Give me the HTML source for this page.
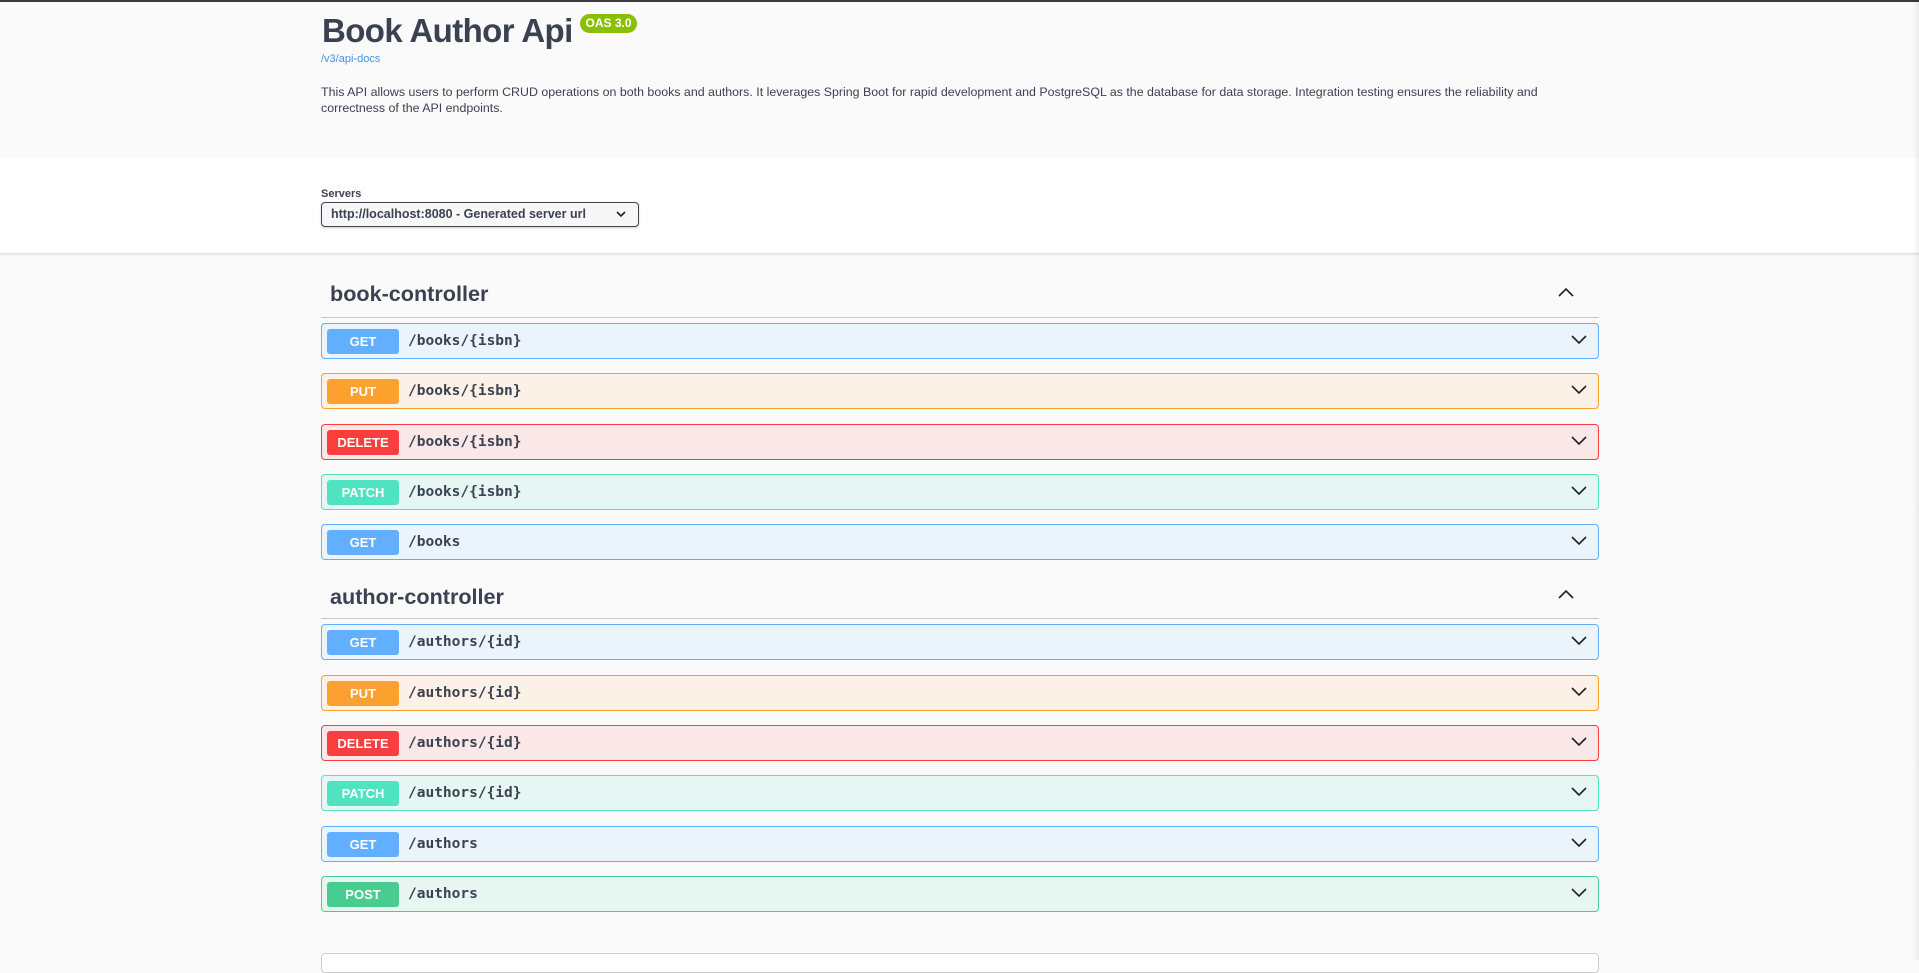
<!DOCTYPE html>
<html><head><meta charset="utf-8"><style>
*{box-sizing:border-box;margin:0;padding:0}
body{width:1919px;height:960px;overflow:hidden;background:#fafafa;font-family:"Liberation Sans",sans-serif;color:#3b4151;position:relative}
.topline{position:absolute;left:0;top:0;width:1919px;height:2px;background:#3b3b3b}
.info{position:absolute;left:0;top:2px;width:1919px;height:156px;background:#fafafa}
.white{position:absolute;left:0;top:158px;width:1919px;height:96px;background:#fff;border-bottom:1px solid #e0e0e0;box-shadow:0 1px 2px rgba(0,0,0,.08)}
.scroll{position:absolute;right:0;top:0;width:6px;height:960px;background:linear-gradient(to right,rgba(0,0,0,0),rgba(0,0,0,.06))}
h1{position:absolute;left:322px;top:12px;font-size:33px;font-weight:bold;color:#3b4151;letter-spacing:-0.6px}
.oas{position:absolute;left:580px;top:14px;width:57px;height:19px;border-radius:10px;background:#89bf04;color:#fff;font-size:12px;font-weight:bold;text-align:center;line-height:19px}
.link{position:absolute;left:321px;top:53px;font-size:11px;color:#4990e2}
.desc{position:absolute;left:321px;top:84px;width:1280px;font-size:12.4px;line-height:16px;color:#3b4151}
.slabel{position:absolute;left:321px;top:188px;font-size:11px;font-weight:bold}
.select{position:absolute;left:321px;top:202px;width:318px;height:25px;border:1px solid #41444e;border-radius:4px;background:#f7f7f7;font-size:12.5px;font-weight:bold;padding-left:9px;line-height:23px;box-shadow:0 1px 2px rgba(0,0,0,.2)}
.select svg{position:absolute;right:12px;top:8px}
.tag{position:absolute;left:330px;font-size:21.6px;font-weight:bold}
.sep{position:absolute;left:321px;width:1278px;height:1px;background:#c8c8c8}
.up{position:absolute;left:1558px}
.row{position:absolute;left:321px;width:1278px;height:36px;border:1px solid;border-radius:4px}
.row .b{position:absolute;left:5px;top:5px;width:72px;height:25px;border-radius:3px;color:#fff;font-size:13px;font-weight:bold;text-align:center;line-height:25px}
.row .p{position:absolute;left:86px;top:0;line-height:34px;font-family:"DejaVu Sans Mono","Liberation Mono",monospace;font-weight:bold;font-size:14.5px;color:#3b4151}
.row svg{position:absolute;right:11px;top:11px}
.get{background:#ebf3fb;border-color:#61affe}.get .b{background:#61affe}
.put{background:#fbf1e6;border-color:#fca130}.put .b{background:#fca130}
.del{background:#fae7e7;border-color:#f93e3e}.del .b{background:#f93e3e}
.pat{background:#e6f7f3;border-color:#50e3c2}.pat .b{background:#50e3c2}
.pos{background:#e7f6f0;border-color:#49cc90}.pos .b{background:#49cc90}
.bottom{position:absolute;left:321px;top:953px;width:1278px;height:20px;border:1px solid #cfcfcf;border-radius:4px;background:#fff}
</style></head><body>
<div class="info"></div><div class="white"></div><div class="topline"></div>
<h1>Book Author Api</h1><div class="oas">OAS 3.0</div>
<div class="link">/v3/api-docs</div>
<div class="desc">This API allows users to perform CRUD operations on both books and authors. It leverages Spring Boot for rapid development and PostgreSQL as the database for data storage. Integration testing ensures the reliability and correctness of the API endpoints.</div>
<div class="slabel">Servers</div>
<div class="select">http://localhost:8080 - Generated server url<svg width="10" height="7" viewBox="0 0 10 7"><path d="M1 1l4 4 4-4" fill="none" stroke="#222" stroke-width="1.6"/></svg></div>

<div class="tag" style="top:281px">book-controller</div>
<svg class="up" style="top:287px" width="16" height="10" viewBox="0 0 16 10"><path d="M1 9l7-7 7 7" fill="none" stroke="#222" stroke-width="1.6"/></svg>
<div class="sep" style="top:317px"></div>

<div class="tag" style="top:584px">author-controller</div>
<svg class="up" style="top:589px" width="16" height="10" viewBox="0 0 16 10"><path d="M1 9l7-7 7 7" fill="none" stroke="#222" stroke-width="1.6"/></svg>
<div class="sep" style="top:618px"></div>

<div class="row get" style="top:323px"><div class="b">GET</div><div class="p">/books/{isbn}</div><svg width="16" height="10" viewBox="0 0 16 10"><path d="M1 1l7 7 7-7" fill="none" stroke="#222" stroke-width="1.6"/></svg></div>
<div class="row put" style="top:373px"><div class="b">PUT</div><div class="p">/books/{isbn}</div><svg width="16" height="10" viewBox="0 0 16 10"><path d="M1 1l7 7 7-7" fill="none" stroke="#222" stroke-width="1.6"/></svg></div>
<div class="row del" style="top:424px"><div class="b">DELETE</div><div class="p">/books/{isbn}</div><svg width="16" height="10" viewBox="0 0 16 10"><path d="M1 1l7 7 7-7" fill="none" stroke="#222" stroke-width="1.6"/></svg></div>
<div class="row pat" style="top:474px"><div class="b">PATCH</div><div class="p">/books/{isbn}</div><svg width="16" height="10" viewBox="0 0 16 10"><path d="M1 1l7 7 7-7" fill="none" stroke="#222" stroke-width="1.6"/></svg></div>
<div class="row get" style="top:524px"><div class="b">GET</div><div class="p">/books</div><svg width="16" height="10" viewBox="0 0 16 10"><path d="M1 1l7 7 7-7" fill="none" stroke="#222" stroke-width="1.6"/></svg></div>

<div class="row get" style="top:624px"><div class="b">GET</div><div class="p">/authors/{id}</div><svg width="16" height="10" viewBox="0 0 16 10"><path d="M1 1l7 7 7-7" fill="none" stroke="#222" stroke-width="1.6"/></svg></div>
<div class="row put" style="top:675px"><div class="b">PUT</div><div class="p">/authors/{id}</div><svg width="16" height="10" viewBox="0 0 16 10"><path d="M1 1l7 7 7-7" fill="none" stroke="#222" stroke-width="1.6"/></svg></div>
<div class="row del" style="top:725px"><div class="b">DELETE</div><div class="p">/authors/{id}</div><svg width="16" height="10" viewBox="0 0 16 10"><path d="M1 1l7 7 7-7" fill="none" stroke="#222" stroke-width="1.6"/></svg></div>
<div class="row pat" style="top:775px"><div class="b">PATCH</div><div class="p">/authors/{id}</div><svg width="16" height="10" viewBox="0 0 16 10"><path d="M1 1l7 7 7-7" fill="none" stroke="#222" stroke-width="1.6"/></svg></div>
<div class="row get" style="top:826px"><div class="b">GET</div><div class="p">/authors</div><svg width="16" height="10" viewBox="0 0 16 10"><path d="M1 1l7 7 7-7" fill="none" stroke="#222" stroke-width="1.6"/></svg></div>
<div class="row pos" style="top:876px"><div class="b">POST</div><div class="p">/authors</div><svg width="16" height="10" viewBox="0 0 16 10"><path d="M1 1l7 7 7-7" fill="none" stroke="#222" stroke-width="1.6"/></svg></div>

<div class="bottom"></div>
<div class="scroll"></div>
</body></html>
